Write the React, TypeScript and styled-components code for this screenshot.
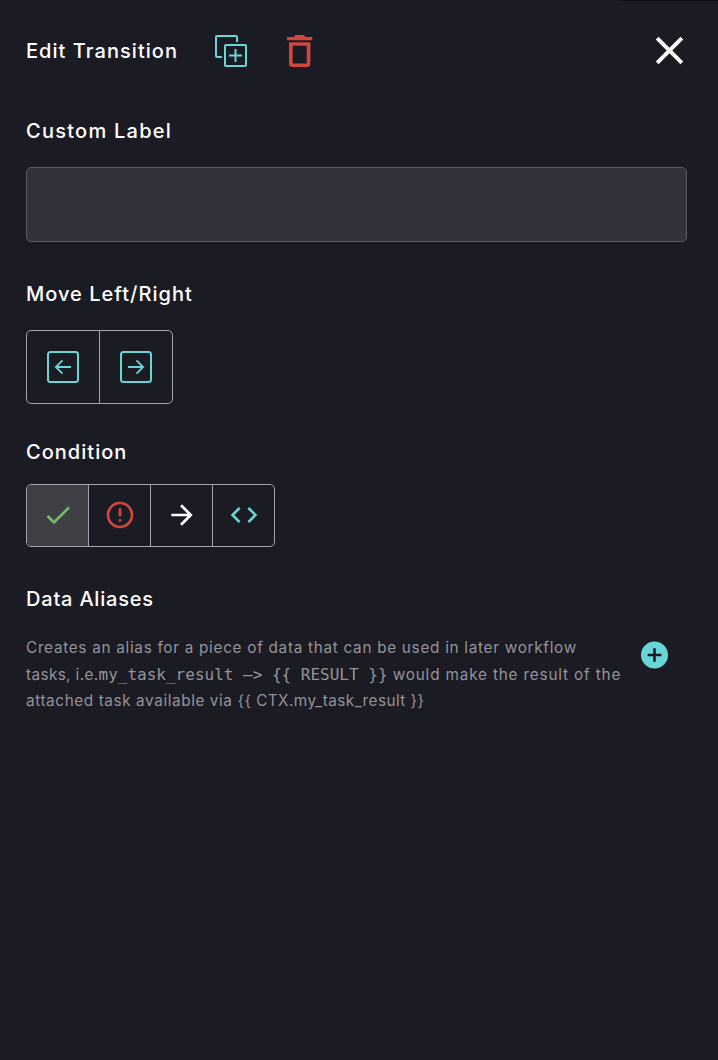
import React from "react";
import styled, { createGlobalStyle } from "styled-components";

const GlobalStyle = createGlobalStyle`
  *, *::before, *::after { box-sizing: border-box; }
  body { margin: 0; background: #1b1b24; }
`;

const Panel = styled.main`
  position: relative;
  min-height: 1060px;
  padding: 30px 31px 0 26px;
  background: #1b1b24;
  color: #fff;
  font-family: Inter, "Liberation Sans", sans-serif;
  &::before {
    content: "";
    position: absolute;
    top: 0;
    right: 0;
    width: 98px;
    height: 1px;
    background: #101016;
  }
`;

const Header = styled.header`
  display: flex;
  align-items: center;
  height: 42px;
`;

const Title = styled.h2<{ $spacing: number }>`
  margin: 0;
  font-size: 20px;
  font-weight: 500;
  line-height: 26px;
  letter-spacing: ${(p) => p.$spacing}px;
  white-space: nowrap;
`;

const HeaderTitle = styled(Title)`
  width: 189px;
`;

const IconButton = styled.button<{ $color: string }>`
  display: flex;
  padding: 0;
  border: 0;
  background: none;
  color: ${(p) => p.$color};
  svg { display: block; }
`;

const DeleteButton = styled(IconButton)`
  margin-left: 40px;
`;

const CloseButton = styled(IconButton)`
  margin: 0 -6px 0 auto;
  padding-bottom: 2px;
`;

const Section = styled.section<{ $top: number; $gap: number }>`
  display: flex;
  flex-direction: column;
  align-items: flex-start;
  margin-top: ${(p) => p.$top}px;
  gap: ${(p) => p.$gap}px;
`;

const TextInput = styled.input`
  width: 100%;
  height: 75px;
  padding: 0 20px;
  border: 1px solid #5b5b67;
  border-radius: 5px;
  background: #32323c;
  color: #fff;
  font: inherit;
`;

const ButtonGroup = styled.div`
  display: flex;
  border: 1px solid #a3a2b0;
  border-radius: 5px;
  overflow: hidden;
`;

const GroupButton = styled.button<{ $size: number; $color: string; $active?: boolean }>`
  display: flex;
  align-items: center;
  justify-content: center;
  box-sizing: content-box;
  width: ${(p) => p.$size}px;
  height: ${(p) => p.$size}px;
  padding: 0;
  border: 0;
  background: ${(p) => (p.$active ? "#403f46" : "transparent")};
  color: ${(p) => p.$color};
  & + & { border-left: 1px solid #a3a2b0; }
`;

const ConditionButton = styled(GroupButton)`
  height: 60px;
  padding-bottom: 1px;
`;

const AliasRow = styled.div`
  display: flex;
  justify-content: space-between;
  align-items: flex-start;
  width: 100%;
  padding-right: 16px;
`;

const Description = styled.p`
  margin: 0;
  color: #949397;
  font-size: 15.3px;
  line-height: 26.5px;
`;

const Line = styled.span`
  display: block;
  height: 26.5px;
  white-space: nowrap;
`;

const Words = styled.span<{ $spacing: number }>`
  letter-spacing: ${(p) => p.$spacing}px;
`;

const Code = styled.code`
  font-family: "DejaVu Sans Mono", monospace;
  font-size: 16px;
`;

const AddButton = styled(IconButton)`
  margin-top: 4px;
`;

const cyan = "#68d5d6";
const red = "#d2473d";

const Glyph = ({ d, size = 32 }: { d: string; size?: number }) => (
  <svg width={size} height={size} viewBox="0 0 24 24" fill="currentColor">
    <path d={d} />
  </svg>
);

const DuplicateIcon = () => (
  <svg width="32" height="32" viewBox="0 0 32 32" fill="none" stroke="currentColor" strokeWidth="2">
    <path d="M22 7V2a1 1 0 0 0-1-1H2a1 1 0 0 0-1 1v19a1 1 0 0 0 1 1h5" />
    <rect x="10" y="10" width="21" height="21" rx="1" />
    <path d="M20.5 14v13M14 20.5h13" />
  </svg>
);

const TrashIcon = () => (
  <svg width="26" height="32" viewBox="0 0 26 32" fill="currentColor">
    <path d="M0 2h6.8L8.5 0h8.3L18.5 2h6.8v3.3H0z" />
    <path fillRule="evenodd" d="M2 7.2h21.4v21.2a3.5 3.5 0 0 1-3.5 3.5H5.5A3.5 3.5 0 0 1 2 28.4zm3.7 3.5v17.7h14V10.7z" />
  </svg>
);

const BoxArrowIcon = ({ left }: { left?: boolean }) => (
  <svg width="32" height="32" viewBox="0 0 32 32" fill="none" stroke="currentColor" strokeWidth="2">
    <rect x="1" y="1" width="30" height="30" rx="2.5" />
    <path
      strokeWidth="1.8"
      d={left ? "M24 16H9M15.5 9.3L8.8 16l6.7 6.7" : "M8 16h15M16.5 9.3L23.2 16l-6.7 6.7"}
    />
  </svg>
);

const AddIcon = () => (
  <svg width="33" height="33" viewBox="0 0 33 33">
    <circle cx="16.5" cy="16" r="13.5" fill="currentColor" />
    <path d="M16.5 9.2v13.6M9.7 16h13.6" stroke="#1b1b24" strokeWidth="2.6" />
  </svg>
);

const paths = {
  close: "M19 6.41 17.59 5 12 10.59 6.41 5 5 6.41 10.59 12 5 17.59 6.41 19 12 13.41 17.59 19 19 17.59 13.41 12z",
  check: "M9 16.17 4.83 12l-1.42 1.41L9 19 21 7l-1.41-1.41z",
  error: "M11 15h2v2h-2zm0-8h2v6h-2zm.99-5C6.47 2 2 6.48 2 12s4.47 10 9.99 10C17.52 22 22 17.52 22 12S17.52 2 11.99 2zM12 20c-4.42 0-8-3.58-8-8s3.58-8 8-8 8 3.58 8 8-3.58 8-8 8z",
  forward: "m12 4-1.41 1.41L16.17 11H4v2h12.17l-5.58 5.59L12 20l8-8z",
  code: "M9.4 16.6 4.8 12l4.6-4.6L8 6l-6 6 6 6 1.4-1.4zm5.2 0 4.6-4.6-4.6-4.6L16 6l6 6-6 6-1.4-1.4z",
};

export default function App() {
  return (
    <>
      <GlobalStyle />
      <Panel>
        <Header>
          <HeaderTitle $spacing={1.05}>Edit Transition</HeaderTitle>
          <IconButton $color={cyan} aria-label="Duplicate"><DuplicateIcon /></IconButton>
          <DeleteButton $color={red} aria-label="Delete"><TrashIcon /></DeleteButton>
          <CloseButton $color="#fff" aria-label="Close"><Glyph d={paths.close} size={47} /></CloseButton>
        </Header>

        <Section $top={46} $gap={23}>
          <Title $spacing={1.25}>Custom Label</Title>
          <TextInput aria-label="Custom Label" />
        </Section>

        <Section $top={39} $gap={23}>
          <Title $spacing={1.02}>Move Left/Right</Title>
          <ButtonGroup>
            <GroupButton $size={72} $color={cyan} aria-label="Move left"><BoxArrowIcon left /></GroupButton>
            <GroupButton $size={72} $color={cyan} aria-label="Move right"><BoxArrowIcon /></GroupButton>
          </ButtonGroup>
        </Section>

        <Section $top={35} $gap={19}>
          <Title $spacing={1.03}>Condition</Title>
          <ButtonGroup>
            <ConditionButton $size={61} $color="#78b86b" $active aria-label="Success"><Glyph d={paths.check} /></ConditionButton>
            <ConditionButton $size={61} $color={red} aria-label="Error"><Glyph d={paths.error} /></ConditionButton>
            <ConditionButton $size={61} $color="#fff" aria-label="Always"><Glyph d={paths.forward} /></ConditionButton>
            <ConditionButton $size={61} $color={cyan} aria-label="Custom"><Glyph d={paths.code} /></ConditionButton>
          </ButtonGroup>
        </Section>

        <Section $top={39} $gap={23}>
          <Title $spacing={0.8}>Data Aliases</Title>
          <AliasRow>
            <Description>
              <Line>
                <Words $spacing={0.71}>Creates an alias for a piece of data that can be used in later workflow</Words>
              </Line>
              <Line>
                <Words $spacing={0.38}>tasks, i.e.</Words>
                <Code>my_task_result –&gt; {"{{ RESULT }}"}</Code>
                <Words $spacing={0.83}> would make the result of the</Words>
              </Line>
              <Line>
                <Words $spacing={0.6}>attached task available via </Words>
                <Words $spacing={0.45}>{"{{ CTX.my_task_result }}"}</Words>
              </Line>
            </Description>
            <AddButton $color={cyan} aria-label="Add alias"><AddIcon /></AddButton>
          </AliasRow>
        </Section>
      </Panel>
    </>
  );
}
